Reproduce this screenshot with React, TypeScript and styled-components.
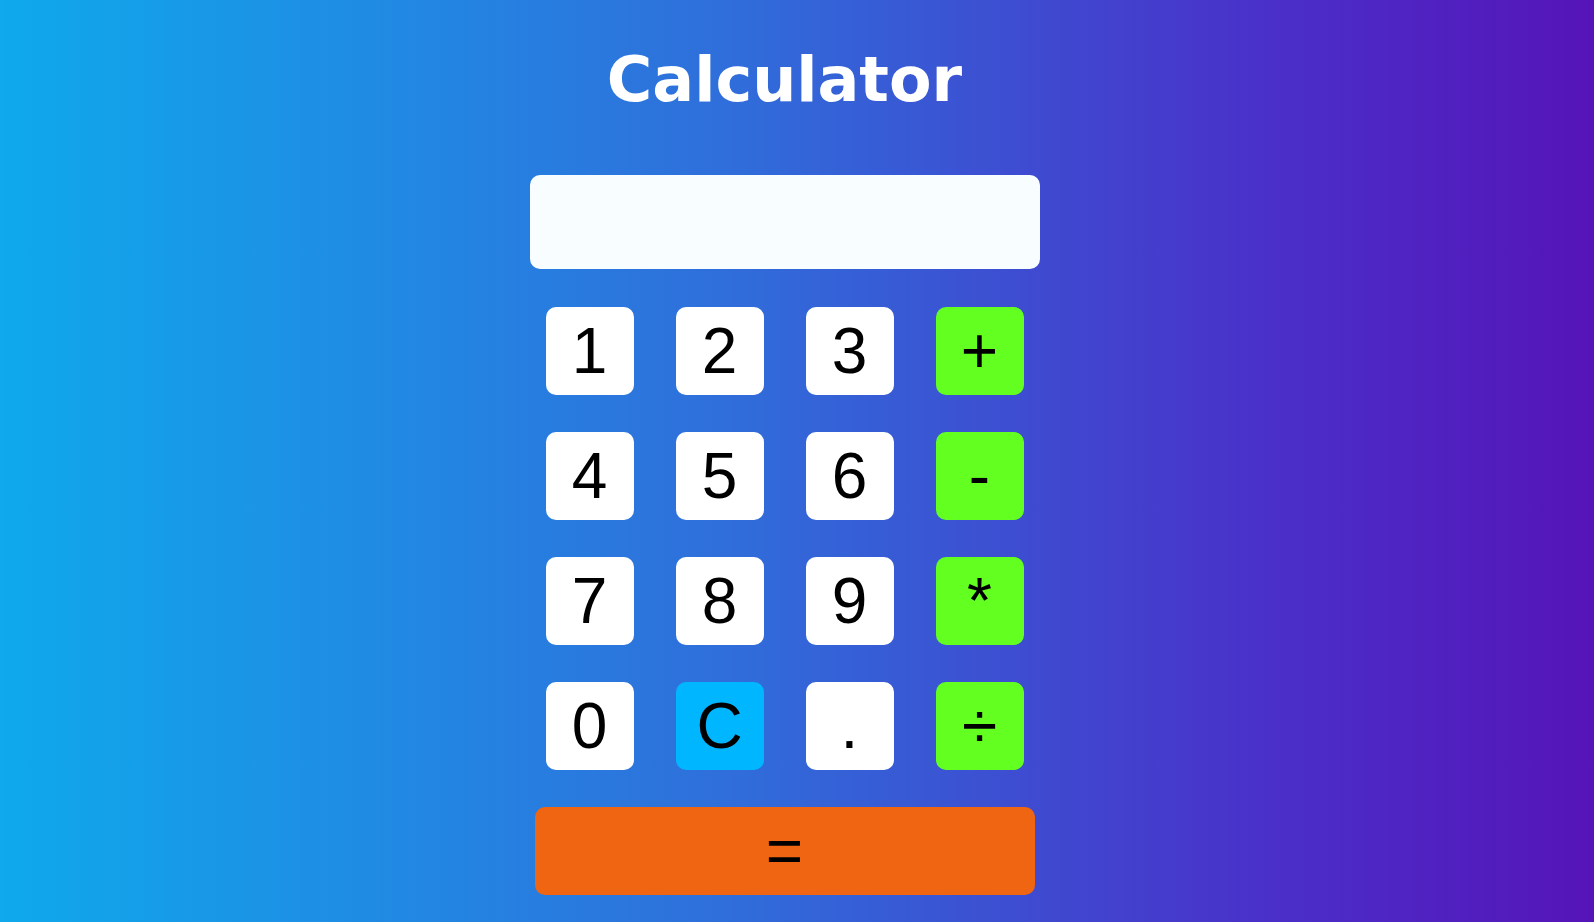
import React from "react";
import styled, { createGlobalStyle } from "styled-components";

const GlobalStyle = createGlobalStyle`
  html, body {
    margin: 0;
    padding: 0;
  }
  body {
    min-height: 100vh;
    background: linear-gradient(90deg, #0fa9ec 0%, #2f6fdb 45%, #4a2fc8 80%, #5614b8 100%);
    font-family: "Liberation Sans", Arial, sans-serif;
  }
`;

const Page = styled.main`
  display: flex;
  flex-direction: column;
  align-items: center;
  padding-right: 25px;
  min-height: 100vh;
  box-sizing: border-box;
`;

const Title = styled.h1`
  margin: 42px 0 58px;
  font-family: "DejaVu Sans", Verdana, sans-serif;
  font-weight: bold;
  font-size: 62px;
  line-height: 75px;
  color: #ffffff;
`;

const Display = styled.div`
  width: 510px;
  height: 94px;
  border-radius: 10px;
  background: #f8fdff;
  margin-bottom: 38px;
`;

const Keypad = styled.div`
  display: grid;
  grid-template-columns: repeat(4, 88px);
  grid-auto-rows: 88px;
  column-gap: 42px;
  row-gap: 37px;
`;

type Variant = "digit" | "op" | "clear" | "equals";

const colors: Record<Variant, string> = {
  digit: "#ffffff",
  op: "#62ff21",
  clear: "#00b6ff",
  equals: "#f06511",
};

const Key = styled.button<{ $variant: Variant }>`
  display: flex;
  align-items: center;
  justify-content: center;
  padding: 0;
  border: none;
  border-radius: 10px;
  background: ${(p) => colors[p.$variant]};
  color: #000000;
  font-family: "Liberation Sans", Arial, sans-serif;
  font-size: 64px;
  line-height: normal;
  cursor: pointer;
`;

const EqualsKey = styled(Key)`
  width: 500px;
  height: 88px;
  margin-top: 37px;
`;

const keys: { label: string; variant: Variant }[] = [
  { label: "1", variant: "digit" },
  { label: "2", variant: "digit" },
  { label: "3", variant: "digit" },
  { label: "+", variant: "op" },
  { label: "4", variant: "digit" },
  { label: "5", variant: "digit" },
  { label: "6", variant: "digit" },
  { label: "-", variant: "op" },
  { label: "7", variant: "digit" },
  { label: "8", variant: "digit" },
  { label: "9", variant: "digit" },
  { label: "*", variant: "op" },
  { label: "0", variant: "digit" },
  { label: "C", variant: "clear" },
  { label: ".", variant: "digit" },
  { label: "÷", variant: "op" },
];

export default function App() {
  return (
    <>
      <GlobalStyle />
      <Page>
        <Title>Calculator</Title>
        <Display />
        <Keypad>
          {keys.map((k) => (
            <Key key={k.label} $variant={k.variant}>
              {k.label}
            </Key>
          ))}
        </Keypad>
        <EqualsKey $variant="equals">=</EqualsKey>
      </Page>
    </>
  );
}
